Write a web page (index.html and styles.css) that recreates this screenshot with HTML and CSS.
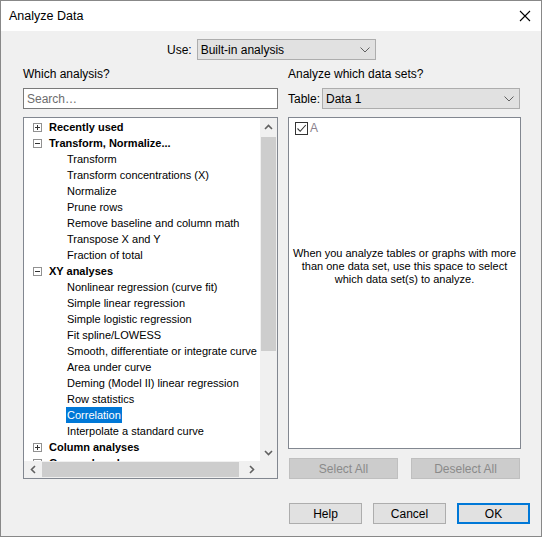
FILE: index.html
```html
<html>
    <head>
        <title>Analyze Data</title>
        <link rel="stylesheet" href="styles.css">
    </head>
    <body>
        <div class="dialog">
            <div class="titlebar">
                <span class="title">Analyze Data</span>
                <svg class="close" width="12" height="12" viewBox="0 0 12 12">
                    <path d="M1 1 L11 11 M11 1 L1 11" stroke="#000" stroke-width="1.1" fill="none"/>
                </svg>
            </div>
            <div class="content">
                <div class="use-row">
                    <span class="use-label">Use:</span>
                    <div class="select use-select">
                        <span>Built-in analysis</span>
                        <svg class="chevron" width="10" height="6" viewBox="0 0 10 6"><path d="M0.5 0.5 L5 5 L9.5 0.5" stroke="#606060" fill="none"/></svg>
                    </div>
                </div>
                <div class="columns">
                    <div class="column">
                        <div class="label">Which analysis?</div>
                        <input class="search" type="text" placeholder="Search…">
                        <div class="tree-box">
                            <div class="tree">
                                <div class="row cat"><span class="expander plus"></span>Recently used</div>
                                <div class="row cat"><span class="expander"></span>Transform, Normalize...</div>
                                <div class="row item">Transform</div>
                                <div class="row item">Transform concentrations (X)</div>
                                <div class="row item">Normalize</div>
                                <div class="row item">Prune rows</div>
                                <div class="row item">Remove baseline and column math</div>
                                <div class="row item">Transpose X and Y</div>
                                <div class="row item">Fraction of total</div>
                                <div class="row cat"><span class="expander"></span>XY analyses</div>
                                <div class="row item">Nonlinear regression (curve fit)</div>
                                <div class="row item">Simple linear regression</div>
                                <div class="row item">Simple logistic regression</div>
                                <div class="row item">Fit spline/LOWESS</div>
                                <div class="row item">Smooth, differentiate or integrate curve</div>
                                <div class="row item">Area under curve</div>
                                <div class="row item">Deming (Model II) linear regression</div>
                                <div class="row item">Row statistics</div>
                                <div class="row item"><span class="selected">Correlation</span></div>
                                <div class="row item">Interpolate a standard curve</div>
                                <div class="row cat"><span class="expander plus"></span>Column analyses</div>
                                <div class="row cat"><span class="expander plus"></span>Grouped analyses</div>
                            </div>
                            <div class="vscroll">
                                <div class="sb-btn"><svg width="9" height="6" viewBox="0 0 9 6"><path d="M1 5 L4.5 1.5 L8 5" stroke="#606060" stroke-width="1.6" fill="none"/></svg></div>
                                <div class="vthumb"></div>
                                <div class="sb-btn sb-end"><svg width="9" height="6" viewBox="0 0 9 6"><path d="M1 1 L4.5 4.5 L8 1" stroke="#606060" stroke-width="1.6" fill="none"/></svg></div>
                            </div>
                            <div class="hscroll">
                                <div class="sb-btn"><svg width="6" height="9" viewBox="0 0 6 9"><path d="M5 1 L1.5 4.5 L5 8" stroke="#606060" stroke-width="1.6" fill="none"/></svg></div>
                                <div class="hthumb"></div>
                                <div class="sb-btn sb-end"><svg width="6" height="9" viewBox="0 0 6 9"><path d="M1 1 L4.5 4.5 L1 8" stroke="#606060" stroke-width="1.6" fill="none"/></svg></div>
                            </div>
                            <div class="corner"></div>
                        </div>
                    </div>
                    <div class="column">
                        <div class="label">Analyze which data sets?</div>
                        <div class="table-row">
                            <span class="table-label">Table:</span>
                            <div class="select table-select">
                                <span>Data 1</span>
                                <svg class="chevron" width="10" height="6" viewBox="0 0 10 6"><path d="M0.5 0.5 L5 5 L9.5 0.5" stroke="#606060" fill="none"/></svg>
                            </div>
                        </div>
                        <div class="data-box">
                            <div class="dataset">
                                <span class="check">
                                    <svg width="11" height="11" viewBox="0 0 11 11"><path d="M1.5 5.5 L4.2 8.3 L9.8 2" stroke="#333" stroke-width="1.1" fill="none"/></svg>
                                </span>
                                <span class="dataset-name">A</span>
                            </div>
                            <p class="hint">When you analyze tables or graphs with more<br>than one data set, use this space to select<br>which data set(s) to analyze.</p>
                        </div>
                        <div class="select-buttons">
                            <button class="btn" disabled>Select All</button>
                            <button class="btn" disabled>Deselect All</button>
                        </div>
                    </div>
                </div>
                <div class="actions">
                    <button class="btn">Help</button>
                    <button class="btn">Cancel</button>
                    <button class="btn default">OK</button>
                </div>
            </div>
        </div>
    </body>
</html>
```

FILE: styles.css
```css
* {
    box-sizing: border-box;
}
body {
    margin: 0;
    font-family: "Liberation Sans", Arial, sans-serif;
    font-size: 12px;
    color: #000;
}
.dialog {
    width: 542px;
    height: 537px;
    border: 1px solid #888;
    background-color: #f0f0f0;
}
.titlebar {
    height: 30px;
    background-color: #fff;
    display: flex;
    align-items: center;
    justify-content: space-between;
    padding: 0 10px 0 8px;
}
.title {
    font-size: 12.5px;
}
.content {
    padding: 8px 11px 0 22px;
}
.use-row {
    display: flex;
    align-items: center;
    padding-left: 144px;
}
.use-label {
    margin-right: 5px;
}
.select {
    height: 21px;
    background-color: #e1e1e1;
    border: 1px solid #adadad;
    display: flex;
    align-items: center;
    justify-content: space-between;
    padding: 0 5px 0 3px;
}
.use-select {
    width: 179px;
}
.columns {
    display: grid;
    grid-template-columns: 255px 233px;
    column-gap: 10px;
    margin-top: 7px;
}
.column {
    display: flex;
    flex-direction: column;
}
.label {
    height: 15px;
    line-height: 15px;
    margin-bottom: 6px;
}
.search {
    height: 21px;
    width: 255px;
    margin: 0;
    border: 1px solid #7a7a7a;
    background-color: #fff;
    font-family: "Liberation Sans", Arial, sans-serif;
    font-size: 12px;
    padding: 0 3px;
    outline: none;
}
.search::placeholder {
    color: #6d6d6d;
}
.tree-box {
    margin-top: 8px;
    height: 362px;
    border: 1px solid #828790;
    background-color: #fff;
    display: grid;
    grid-template-columns: 236px 17px;
    grid-template-rows: 343px 17px;
}
.tree {
    overflow: hidden;
    padding-top: 1px;
    font-size: 11px;
}
.row {
    height: 16px;
    line-height: 16px;
    display: flex;
    align-items: center;
    white-space: nowrap;
}
.cat {
    padding-left: 9px;
    font-weight: bold;
}
.item {
    padding-left: 43px;
}
.selected {
    background-color: #0078d7;
    color: #fff;
    padding: 0 1px;
    margin-left: -1px;
}
.expander {
    position: relative;
    width: 9px;
    height: 9px;
    border: 1px solid #919191;
    margin-right: 7px;
    flex-shrink: 0;
}
.expander::before {
    content: "";
    position: absolute;
    left: 1px;
    top: 3px;
    width: 5px;
    height: 1px;
    background-color: #333;
}
.plus::after {
    content: "";
    position: absolute;
    left: 3px;
    top: 1px;
    width: 1px;
    height: 5px;
    background-color: #333;
}
.vscroll {
    background-color: #f0f0f0;
    display: flex;
    flex-direction: column;
}
.hscroll {
    background-color: #f0f0f0;
    display: flex;
}
.sb-btn {
    width: 17px;
    height: 17px;
    display: flex;
    align-items: center;
    justify-content: center;
    flex-shrink: 0;
}
.sb-end {
    margin-top: auto;
    margin-left: auto;
}
.vthumb {
    margin: 2px 1px 0;
    height: 214px;
    background-color: #cdcdcd;
}
.hthumb {
    margin: 1px 0 1px 1px;
    width: 197px;
    background-color: #cdcdcd;
}
.corner {
    background-color: #f0f0f0;
}
.table-row {
    display: flex;
    align-items: center;
}
.table-label {
    margin-right: 2px;
}
.table-select {
    width: 198px;
    padding-left: 3px;
}
.data-box {
    margin-top: 8px;
    height: 332px;
    border: 1px solid #828790;
    background-color: #fff;
    font-size: 11px;
}
.dataset {
    display: flex;
    align-items: center;
    padding: 3px 0 0 6px;
}
.check {
    width: 13px;
    height: 13px;
    border: 1px solid #333;
    display: flex;
    align-items: center;
    justify-content: center;
    margin-right: 2px;
}
.dataset-name {
    color: #8a7f8c;
    font-size: 12px;
}
.hint {
    margin: 112px 0 0;
    text-align: center;
    line-height: 13px;
}
.select-buttons {
    display: flex;
    justify-content: space-between;
    padding: 0 1px;
    margin-top: 9px;
}
.btn {
    width: 73px;
    height: 21px;
    background-color: #e1e1e1;
    border: 1px solid #adadad;
    font-family: "Liberation Sans", Arial, sans-serif;
    font-size: 12px;
    color: #000;
    padding: 0;
}
.select-buttons .btn {
    width: 109px;
}
.btn:disabled {
    background-color: #cccccc;
    border-color: #bfbfbf;
    color: #8a8a8a;
}
.default {
    border: 2px solid #0078d7;
}
.actions {
    display: flex;
    justify-content: flex-end;
    gap: 11px;
    margin-top: 24px;
}
```
